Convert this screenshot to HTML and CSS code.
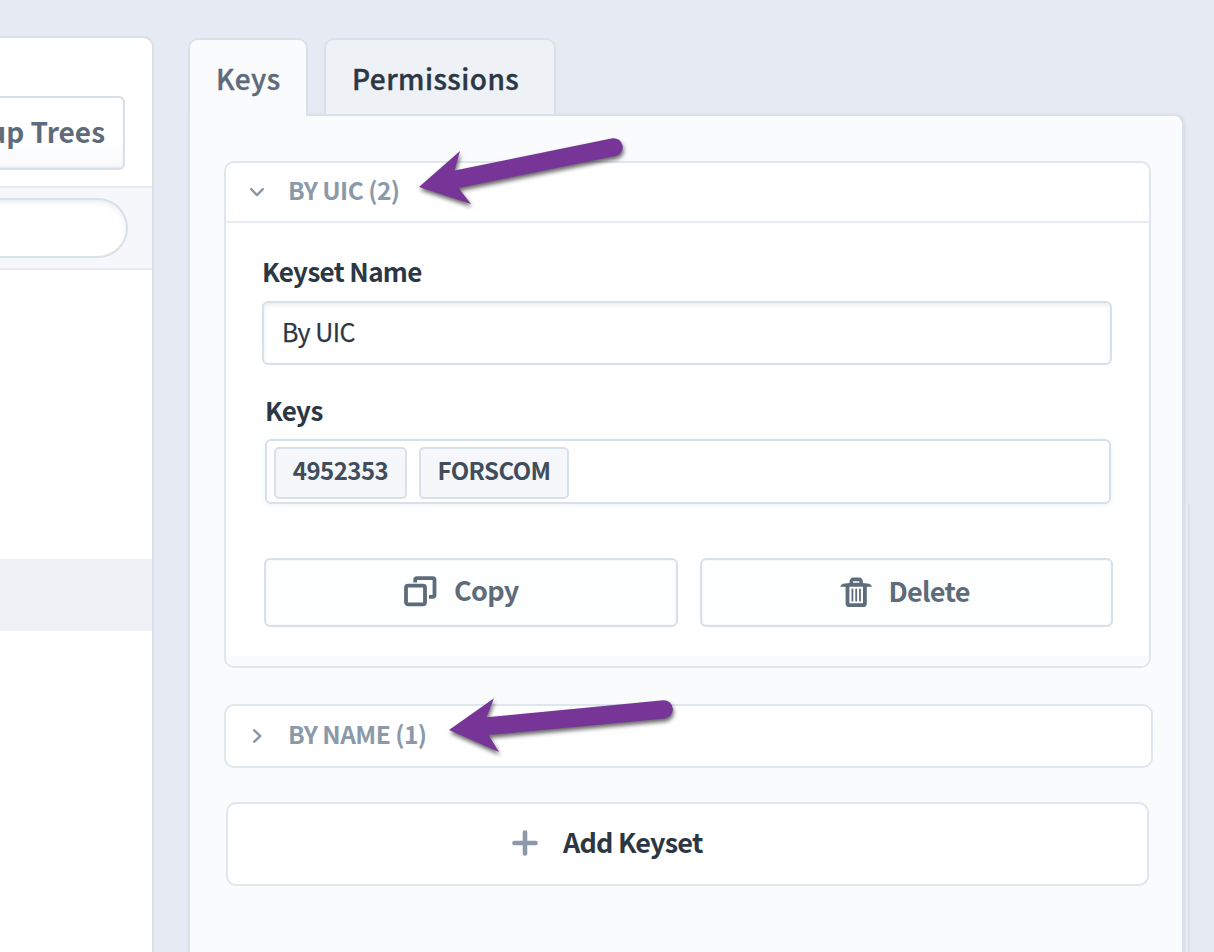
FILE: index.html
```html
<!DOCTYPE html>
<html lang="en">
<head>
    <meta charset="UTF-8">
    <meta name="viewport" content="width=device-width, initial-scale=1.0">
    <title>Keysets</title>
    <link rel="stylesheet" href="styles.css">
</head>
<body>

<div class="sidebar">
    <div class="sidebar-top">
        <button class="trees-btn">Group Trees</button>
    </div>
    <div class="search-bar">
        <div class="search-input"></div>
    </div>
    <div class="tree-list">
        <div class="tree-row selected"></div>
    </div>
</div>

<div class="main">
    <div class="tabs">
        <div class="tab active">Keys</div>
        <div class="tab">Permissions</div>
    </div>

    <div class="panel">
        <div class="keyset open">
            <div class="keyset-header">
                <svg class="chevron" width="16" height="16" viewBox="0 0 16 16">
                    <path d="M2.2 5.2 L8 11.2 L13.8 5.2"></path>
                </svg>
                <span>BY UIC (2)</span>
            </div>
            <div class="keyset-body">
                <div class="label">Keyset Name</div>
                <div class="text-input">By UIC</div>
                <div class="label label-keys">Keys</div>
                <div class="tag-input">
                    <div class="tag tag-number">4952353</div>
                    <div class="tag tag-name">FORSCOM</div>
                </div>
                <div class="actions">
                    <button class="action-btn copy-btn">
                        <svg width="33" height="31" viewBox="0 0 33 31">
                            <rect class="line" x="2" y="9.6" width="19" height="18.8" rx="2.2"></rect>
                            <path class="line" d="M11.2 6.5 V4 Q11.2 2.2 13 2.2 H28.6 Q30.5 2.2 30.5 4 V19 Q30.5 20.8 28.6 20.8 H25"></path>
                        </svg>
                        <span>Copy</span>
                    </button>
                    <button class="action-btn delete-btn">
                        <svg width="32" height="31" viewBox="0 0 32 31">
                            <path class="line" d="M7.5 9 V26.2 Q7.5 28.2 9.5 28.2 H22.9 Q24.9 28.2 24.9 26.2 V9"></path>
                            <path class="solid" d="M0.2 9.8 Q1.2 7 5 6.6 L9.6 6 V3.8 Q10.4 .5 13 .4 H19.4 Q22 .5 22.8 3.8 V6 L27.4 6.6 Q31 7 32 9.8 Z M13 5.8 H19.4 V4.3 H13 Z"></path>
                            <path class="bars" d="M12.4 12.5 V23.7 M16.2 12.5 V23.7 M20 12.5 V23.7"></path>
                        </svg>
                        <span>Delete</span>
                    </button>
                </div>
            </div>
            <div class="keyset-footer"></div>
        </div>

        <div class="keyset closed">
            <div class="keyset-header">
                <svg class="chevron" width="16" height="16" viewBox="0 0 16 16">
                    <path d="M5 2.2 L11.2 8 L5 13.8"></path>
                </svg>
                <span>BY NAME (1)</span>
            </div>
        </div>

        <button class="add-btn">
            <svg width="26" height="26" viewBox="0 0 26 26">
                <path class="plus" d="M13 2.5 V23.5 M2.5 13 H23.5"></path>
            </svg>
            <span>Add Keyset</span>
        </button>
    </div>
</div>
<div class="edge"></div>

<!-- callout arrows -->
<svg class="arrows" width="1214" height="952" viewBox="0 0 1214 952">
    <path d="M419 187 L460 151 L454.6 170.6 L612.5 138.3 A9 9 0 0 1 616.4 155.8 L458.5 188 L471 204 Z"></path>
    <path d="M449 730 L494 698.3 L486.5 717.3 L663.5 700.2 A9.2 9.2 0 0 1 665 718.5 L488.5 735 L499 752 Z"></path>
</svg>

</body>
</html>
```
FILE: styles.css
```css
* {
    box-sizing: border-box;
}
body {
    margin: 0;
    width: 1214px;
    height: 952px;
    overflow: hidden;
    display: flex;
    background-color: #e6ebf3;
    font-family: "Noto Sans CJK SC", "Noto Sans", sans-serif;
    font-weight: 700;
    color: #2d3744;
    line-height: 1;
}
button {
    font: inherit;
    color: #5d6b7a;
    padding: 0;
}
svg {
    flex: none;
}

/* left side */
.sidebar {
    flex: none;
    width: 154px;
    height: 930px;
    margin-top: 36px;
    border: 2px solid #d8e0e8;
    border-left: 0;
    border-radius: 0 11px 0 0;
    background: #fff;
    overflow: hidden;
}
.sidebar-top {
    height: 148px;
    padding: 58px 27px 0 0;
    display: flex;
    justify-content: flex-end;
}
.trees-btn {
    flex: none;
    width: 190px;
    height: 74px;
    padding: 0 18px 5px 0;
    text-align: right;
    white-space: nowrap;
    font-size: 28px;
    border: 2px solid #d8e0e8;
    border-radius: 6px;
    background: linear-gradient(#fff 60%, #f7f9fb);
    box-shadow: inset 0 -1px 2px #e3e8ee;
}
.search-bar {
    height: 84px;
    padding: 10px 24px 0 0;
    background: #f5f7fb;
    border-top: 2px solid #e5ebf1;
    border-bottom: 2px solid #e5ebf1;
}
.search-input {
    height: 60px;
    margin-left: -20px;
    border: 2px solid #d8e0e8;
    border-left: 0;
    border-radius: 0 30px 30px 0;
    background: #fff;
    box-shadow: inset 0 3px 5px #eceff1;
}
.tree-list {
    padding-top: 289px;
}
.tree-row {
    height: 72px;
}
.tree-row.selected {
    background: #eef2f6;
}

/* right side */
.main {
    flex: none;
    width: 996px;
    margin: 38px 0 0 34px;
    display: flex;
    flex-direction: column;
}
.tabs {
    display: flex;
    gap: 16px;
    height: 78px;
    margin-bottom: -2px;
    z-index: 1;
}
.tab {
    width: 232px;
    height: 76px;
    display: flex;
    align-items: center;
    padding: 2px 0 0 26px;
    font-size: 28px;
    font-weight: 500;
    letter-spacing: 0.45px;
    -webkit-text-stroke: 0.4px;
    border: 2px solid #d9e0e8;
    border-bottom: 0;
    border-radius: 10px 10px 0 0;
    background: #eef2f7;
}
.tab.active {
    width: 120px;
    height: 78px;
    padding-bottom: 2px;
    color: #5d6b7a;
    background: #fafbfd;
}
.panel {
    flex: none;
    height: 880px;
    padding: 45px 30px 0 34px;
    display: flex;
    flex-direction: column;
    border: 2px solid #d9e0e8;
    border-radius: 0 10px 0 0;
    background: #fafbfd;
    box-shadow: 1px 0 3px #d3dae4;
}
.keyset {
    width: 927px;
    border: 2px solid #dfe6ed;
    border-radius: 10px;
    background: #fff;
    overflow: hidden;
}
.open {
    height: 507px;
}
.closed {
    width: 929px;
    height: 64px;
    margin-top: 36px;
}
.keyset-header {
    height: 60px;
    display: flex;
    align-items: center;
    gap: 23px;
    padding-left: 23px;
    font-size: 24.5px;
    letter-spacing: -0.55px;
    color: #8b99a8;
}
.keyset-header span {
    padding-bottom: 4px;
}
.open .keyset-header {
    border-bottom: 2px solid #e6ebf1;
}
.chevron path {
    fill: none;
    stroke: #8b99a8;
    stroke-width: 2.4;
    stroke-linecap: round;
    stroke-linejoin: round;
}
.keyset-body {
    height: 433px;
    padding: 36px 37px 0 36px;
}
.label {
    height: 27px;
    padding-bottom: 4px;
    display: flex;
    align-items: center;
    font-size: 26px;
    letter-spacing: -0.65px;
}
.label-keys {
    margin: 33px 0 0 3px;
}
.text-input {
    height: 64px;
    margin-top: 15px;
    padding: 0 0 3px 18px;
    display: flex;
    align-items: center;
    font-size: 25px;
    font-weight: 400;
    letter-spacing: -0.5px;
    -webkit-text-stroke: 0.25px;
    border: 2px solid #d8e0e8;
    border-radius: 6px;
    box-shadow: inset 0 2px 5px #e8ecef;
}
.tag-input {
    height: 65px;
    margin: 14px 1px 0 3px;
    padding: 6px 7px;
    display: flex;
    gap: 12px;
    border: 2px solid #d8e0e8;
    border-radius: 6px;
    box-shadow: 0 2px 6px #f1f4f7;
}
.tag {
    height: 52px;
    padding-bottom: 6px;
    display: flex;
    align-items: center;
    justify-content: center;
    font-size: 24px;
    letter-spacing: -0.55px;
    color: #414d5b;
    border: 2px solid #d8e0e8;
    border-radius: 5px;
    background: #f5f7fb;
}
.tag-number {
    width: 133px;
}
.tag-name {
    width: 150px;
}
.actions {
    display: flex;
    gap: 22px;
    margin: 54px -1px 0 2px;
}
.action-btn {
    width: 414px;
    height: 69px;
    display: flex;
    align-items: center;
    gap: 17px;
    font-size: 27px;
    letter-spacing: -0.7px;
    border: 2px solid #d8e0e8;
    border-radius: 6px;
    background: #fdfefe;
    box-shadow: inset 0 0 2px #e7ecf1;
}
.copy-btn {
    padding: 0 0 2px 138px;
}
.delete-btn {
    padding-left: 138px;
}
.action-btn span {
    padding-bottom: 4px;
}
.line {
    fill: none;
    stroke: #5d6b7a;
    stroke-width: 3.8;
}
.solid {
    fill: #5d6b7a;
    fill-rule: evenodd;
}
.bars {
    stroke: #5d6b7a;
    stroke-width: 1.8;
    stroke-linecap: round;
}
.keyset-footer {
    height: 12px;
    background: #fafbfd;
}
.add-btn {
    width: 923px;
    height: 84px;
    margin: 34px 0 0 2px;
    padding: 0 0 2px 284px;
    display: flex;
    align-items: center;
    gap: 25px;
    font-size: 27px;
    letter-spacing: -0.8px;
    color: #2d3744;
    border: 2px solid #dfe6ed;
    border-radius: 10px;
    background: #fff;
}
.add-btn span {
    padding-bottom: 3px;
}
.plus {
    stroke: #8b99a8;
    stroke-width: 4.6;
    stroke-linecap: round;
}
.edge {
    flex: none;
    width: 2px;
    margin: 504px 0 0 4px;
    background: #dae1ea;
}

/* arrows lie over the cards */
.arrows {
    position: absolute;
    top: 0;
    left: 0;
    pointer-events: none;
}
.arrows path {
    fill: #773598;
    filter: drop-shadow(1px 3px 2px rgba(0, 0, 0, 0.6));
}
```
